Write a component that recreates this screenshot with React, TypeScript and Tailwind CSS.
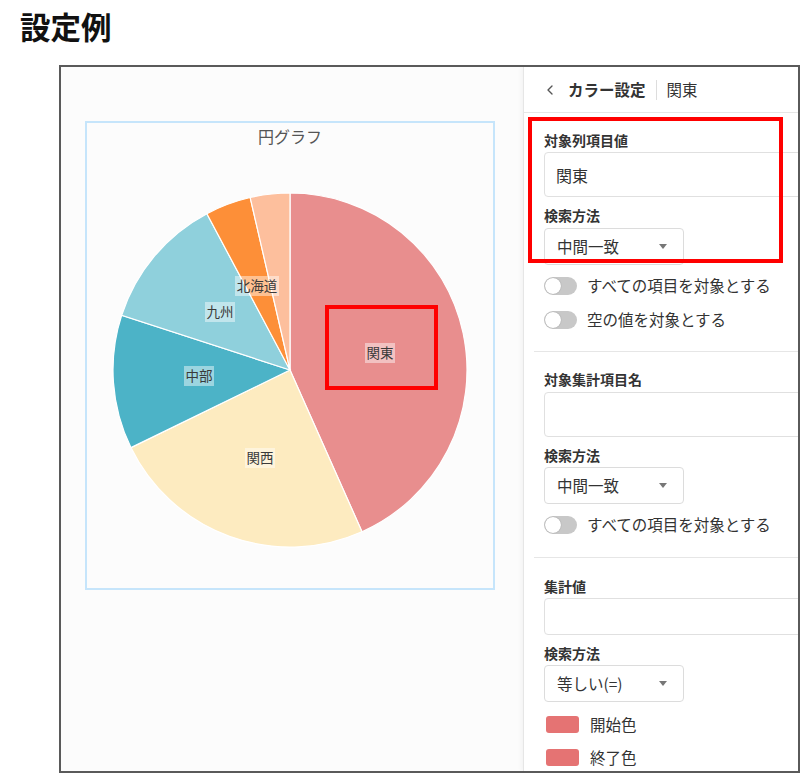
import { ChevronLeft } from 'lucide-react';

const CX = 203;
const CY = 247;
const R = 177;

const pt = (deg: number) => {
    const a = (deg * Math.PI) / 180;
    return [CX + R * Math.sin(a), CY - R * Math.cos(a)];
};

const slicePath = (from: number, to: number) => {
    const [x1, y1] = pt(from);
    const [x2, y2] = pt(to);
    const large = to - from > 180 ? 1 : 0;
    return `M${CX},${CY} L${x1},${y1} A${R},${R} 0 ${large} 1 ${x2},${y2} Z`;
};

const slices = [
    { from: 0, to: 156, color: '#e88e8e' },
    { from: 156, to: 244, color: '#fdebc0' },
    { from: 244, to: 288, color: '#4cb3c7' },
    { from: 288, to: 332, color: '#8fd0dc' },
    { from: 332, to: 347, color: '#fd8f38' },
    { from: 347, to: 360, color: '#fdbf9d' },
];

const labels = [
    { text: '北海道', x: 170, y: 163, w: 44 },
    { text: '九州', x: 133, y: 189, w: 30 },
    { text: '中部', x: 112, y: 253, w: 30 },
    { text: '関西', x: 173, y: 335, w: 30 },
    { text: '関東', x: 293, y: 230, w: 30 },
];

const PieChart = () => (
    <svg width="406" height="465" className="block">
        <text x="203" y="20" textAnchor="middle" fontSize="16" fill="#555">円グラフ</text>
        {slices.map((s) => (
            <path key={s.from} d={slicePath(s.from, s.to)} fill={s.color} stroke="#ffffff" strokeWidth="1.2" />
        ))}
        {labels.map((l) => (
            <g key={l.text}>
                <rect x={l.x - l.w / 2} y={l.y - 10} width={l.w} height="20" fill="#ffffff" fillOpacity="0.45" />
                <text x={l.x} y={l.y + 5} textAnchor="middle" fontSize="13.5" fill="#3a3a3a">{l.text}</text>
            </g>
        ))}
    </svg>
);

const Toggle = ({ label, className = '' }: { label: string; className?: string }) => (
    <div className={`flex items-center h-[20px] ${className}`}>
        <div className="relative w-[33px] h-[18px] rounded-full bg-[#c8c8c8]">
            <div className="absolute left-[1px] top-[1px] w-[16px] h-[16px] rounded-full bg-white shadow-[0_0_1px_rgba(0,0,0,0.4)]" />
        </div>
        <span className="ml-[10px] text-[15.5px] text-[#333]">{label}</span>
    </div>
);

const Select = ({ value, className = '' }: { value: string; className?: string }) => (
    <div className={`flex items-center justify-between w-[140px] h-[37px] pl-[12px] pr-[16px] border border-[#dcdcdc] rounded-[4px] bg-white ${className}`}>
        <span className="text-[15.5px] text-[#333]">{value}</span>
        <span className="w-0 h-0 border-l-[4px] border-r-[4px] border-t-[5px] border-l-transparent border-r-transparent border-t-[#777]" />
    </div>
);

const Label = ({ text, className = '' }: { text: string; className?: string }) => (
    <div className={`h-[20px] leading-[20px] text-[14px] font-bold text-[#333] ${className}`}>{text}</div>
);

const Input = ({ value, height, className = '' }: { value?: string; height: string; className?: string }) => (
    <div className={`flex items-center w-[290px] pl-[11px] border border-[#e0e0e0] rounded-[4px] bg-white text-[16px] text-[#333] ${height} ${className}`}>
        {value}
    </div>
);

export default function App() {
    return (
        <div className="w-[800px] h-[773px] bg-white overflow-hidden" style={{ fontFamily: '"Noto Sans CJK JP", "Noto Sans", sans-serif' }}>
            <div className="h-[65px] pl-[20px] pt-[6px] text-[30.5px] font-bold leading-[40px] text-[#111]">設定例</div>

            <div className="ml-[59px] w-[741px] h-[708px] border-2 border-[#5a5a5a] flex overflow-hidden">
                <div className="relative w-[462px] h-full bg-[#fcfcfc]">
                    <div className="relative ml-[24px] mt-[54px] w-[410px] h-[469px] border-2 border-[#c6e5fb]">
                        <PieChart />
                        <div className="absolute left-[238px] top-[182px] w-[113px] h-[85px] border-4 border-[#ff0000]" />
                    </div>
                </div>

                <div className="relative flex-1 h-full bg-white border-l border-[#e6e6e6] shadow-[-2px_0_4px_rgba(0,0,0,0.04)] overflow-hidden">
                    <div className="flex items-center h-[46px] pl-[18px] border-b border-[#e6e6e6]">
                        <ChevronLeft className="w-[16px] h-[16px] text-[#555]" strokeWidth={2} />
                        <span className="ml-[10px] text-[15.5px] font-bold text-[#333]">カラー設定</span>
                        <span className="ml-[10px] w-px h-[20px] bg-[#dddddd]" />
                        <span className="ml-[10px] text-[15.5px] text-[#333]">関東</span>
                    </div>

                    <div className="pl-[20px]">
                        <Label text="対象列項目値" className="mt-[17px]" />
                        <Input value="関東" height="h-[45px]" className="mt-[2px]" />
                        <Label text="検索方法" className="mt-[8px]" />
                        <Select value="中間一致" className="mt-[3px]" />
                        <Toggle label="すべての項目を対象とする" className="mt-[11px]" />
                        <Toggle label="空の値を対象とする" className="mt-[14px]" />
                    </div>

                    <div className="ml-[10px] mt-[21px] h-px bg-[#e6e6e6]" />

                    <div className="pl-[20px]">
                        <Label text="対象集計項目名" className="mt-[17px]" />
                        <Input height="h-[45px]" className="mt-[3px]" />
                        <Label text="検索方法" className="mt-[8px]" />
                        <Select value="中間一致" className="mt-[2px]" />
                        <Toggle label="すべての項目を対象とする" className="mt-[11px]" />
                    </div>

                    <div className="ml-[10px] mt-[22px] h-px bg-[#e6e6e6]" />

                    <div className="pl-[20px]">
                        <Label text="集計値" className="mt-[18px]" />
                        <Input height="h-[37px]" className="mt-[2px]" />
                        <Label text="検索方法" className="mt-[8px]" />
                        <Select value="等しい(=)" className="mt-[2px]" />
                        <div className="flex items-center mt-[14px]">
                            <span className="ml-[2px] w-[33px] h-[17px] rounded-[3px] bg-[#e57373]" />
                            <span className="ml-[11px] text-[15.5px] text-[#333] leading-[17px]">開始色</span>
                        </div>
                        <div className="flex items-center mt-[16px]">
                            <span className="ml-[2px] w-[33px] h-[17px] rounded-[3px] bg-[#e57373]" />
                            <span className="ml-[11px] text-[15.5px] text-[#333] leading-[17px]">終了色</span>
                        </div>
                    </div>

                    <div className="absolute left-[4px] top-[50px] w-[255px] h-[146px] border-4 border-[#ff0000]" />
                </div>
            </div>
        </div>
    );
}
